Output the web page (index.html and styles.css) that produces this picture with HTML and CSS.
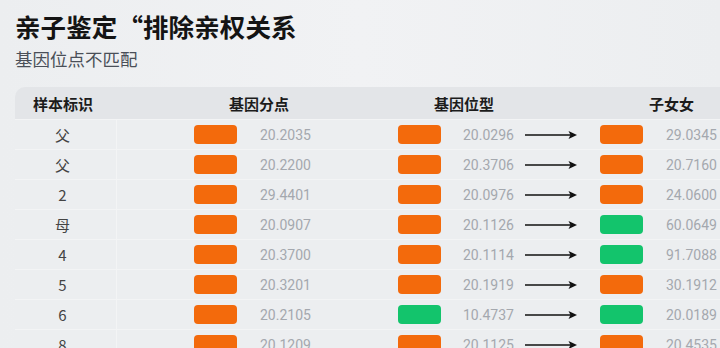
FILE: index.html
```html
<!DOCTYPE html>
<html lang="zh-CN">
<head>
<meta charset="utf-8">
<link rel="stylesheet" href="styles.css">
</head>
<body>
<div class="page">
  <h1 class="title">亲子鉴定“排除亲权关系</h1>
  <p class="subtitle">基因位点不匹配</p>
  <div class="table">
    <div class="row head">
      <div class="id">样本标识</div>
      <div class="h2">基因分点</div>
      <div class="h3">基因位型</div>
      <div class="h4">子女女</div>
    </div>
    <div class="row">
      <div class="id">父</div>
      <span class="bar o b1"></span><span class="num n1">20.2035</span>
      <span class="bar o"></span><span class="num n2">20.0296</span>
      <svg class="arrow" viewBox="0 0 52 10"><line x1="0" y1="5" x2="49" y2="5"/><path d="M43.5 1 L52 5 L43.5 9 L45.5 5 Z"/></svg>
      <span class="bar o b4"></span><span class="num n4">29.0345</span>
    </div>
    <div class="row">
      <div class="id">父</div>
      <span class="bar o b1"></span><span class="num n1">20.2200</span>
      <span class="bar o"></span><span class="num n2">20.3706</span>
      <svg class="arrow" viewBox="0 0 52 10"><line x1="0" y1="5" x2="49" y2="5"/><path d="M43.5 1 L52 5 L43.5 9 L45.5 5 Z"/></svg>
      <span class="bar o b4"></span><span class="num n4">20.7160</span>
    </div>
    <div class="row">
      <div class="id">2</div>
      <span class="bar o b1"></span><span class="num n1">29.4401</span>
      <span class="bar o"></span><span class="num n2">20.0976</span>
      <svg class="arrow" viewBox="0 0 52 10"><line x1="0" y1="5" x2="49" y2="5"/><path d="M43.5 1 L52 5 L43.5 9 L45.5 5 Z"/></svg>
      <span class="bar o b4"></span><span class="num n4">24.0600</span>
    </div>
    <div class="row">
      <div class="id">母</div>
      <span class="bar o b1"></span><span class="num n1">20.0907</span>
      <span class="bar o"></span><span class="num n2">20.1126</span>
      <svg class="arrow" viewBox="0 0 52 10"><line x1="0" y1="5" x2="49" y2="5"/><path d="M43.5 1 L52 5 L43.5 9 L45.5 5 Z"/></svg>
      <span class="bar g b4"></span><span class="num n4">60.0649</span>
    </div>
    <div class="row">
      <div class="id">4</div>
      <span class="bar o b1"></span><span class="num n1">20.3700</span>
      <span class="bar o"></span><span class="num n2">20.1114</span>
      <svg class="arrow" viewBox="0 0 52 10"><line x1="0" y1="5" x2="49" y2="5"/><path d="M43.5 1 L52 5 L43.5 9 L45.5 5 Z"/></svg>
      <span class="bar g b4"></span><span class="num n4">91.7088</span>
    </div>
    <div class="row">
      <div class="id">5</div>
      <span class="bar o b1"></span><span class="num n1">20.3201</span>
      <span class="bar o"></span><span class="num n2">20.1919</span>
      <svg class="arrow" viewBox="0 0 52 10"><line x1="0" y1="5" x2="49" y2="5"/><path d="M43.5 1 L52 5 L43.5 9 L45.5 5 Z"/></svg>
      <span class="bar o b4"></span><span class="num n4">30.1912</span>
    </div>
    <div class="row">
      <div class="id">6</div>
      <span class="bar o b1"></span><span class="num n1">20.2105</span>
      <span class="bar g"></span><span class="num n2">10.4737</span>
      <svg class="arrow" viewBox="0 0 52 10"><line x1="0" y1="5" x2="49" y2="5"/><path d="M43.5 1 L52 5 L43.5 9 L45.5 5 Z"/></svg>
      <span class="bar g b4"></span><span class="num n4">20.0189</span>
    </div>
    <div class="row">
      <div class="id">8</div>
      <span class="bar o b1"></span><span class="num n1">20.1209</span>
      <span class="bar o"></span><span class="num n2">20.1125</span>
      <svg class="arrow" viewBox="0 0 52 10"><line x1="0" y1="5" x2="49" y2="5"/><path d="M43.5 1 L52 5 L43.5 9 L45.5 5 Z"/></svg>
      <span class="bar o b4"></span><span class="num n4">20.4535</span>
    </div>
  </div>
</div>
</body>
</html>
```

FILE: styles.css
```css
html, body {
  margin: 0;
  padding: 0;
  width: 720px;
  height: 348px;
  overflow: hidden;
}
body {
  background: linear-gradient(90deg, #eceef0 0%, #f1f2f4 50%, #eceef0 100%);
  font-family: "Noto Sans CJK SC", "Noto Sans", sans-serif;
  color: #222;
}
.page {
  padding: 10px 0 0 15px;
}
.title {
  margin: 0;
  font-size: 25.5px;
  line-height: 32px;
  font-weight: 700;
  color: #141414;
  letter-spacing: 0.1px;
}
.subtitle {
  margin: 5px 0 0;
  font-size: 17.5px;
  line-height: 24px;
  color: #4a4f58;
}
.table {
  margin-top: 16px;
  width: 720px;
  border-radius: 10px 0 0 0;
  overflow: hidden;
  background: #eceef0;
}
.row {
  display: flex;
  align-items: center;
  height: 30px;
  border-top: 1px solid #f3f4f5;
  box-sizing: border-box;
}
.row.head {
  height: 32px;
  border-top: none;
  background: #e3e5e8;
  font-weight: 600;
  font-size: 15px;
  color: #1c1c1c;
}
.id {
  width: 102px;
  flex: none;
  align-self: stretch;
  display: flex;
  align-items: center;
  justify-content: center;
  padding-right: 6px;
  box-sizing: border-box;
  border-right: 1px solid #f3f4f5;
  font-size: 15px;
  color: #444;
}
.head .id {
  border-right: none;
  color: #1c1c1c;
}
.h2 { margin-left: 112px; width: 60px; }
.h3 { margin-left: 145px; width: 60px; }
.h4 { margin-left: 155px; }
.bar {
  flex: none;
  width: 43px;
  height: 19px;
  border-radius: 4px;
}
.bar.o { background: #f36a0c; }
.bar.g { background: #13c46c; }
.b1 { margin-left: 77px; }
.b4 { margin-left: 23px; }
.num {
  flex: none;
  font-family: Roboto, "Noto Sans", sans-serif;
  font-size: 14px;
  color: #a4a8ae;
}
.n1 { margin-left: 23px; width: 138px; }
.n2 { margin-left: 22px; width: 62px; }
.n4 { margin-left: 23px; }
.arrow {
  flex: none;
  width: 52px;
  height: 10px;
}
.arrow line {
  stroke: #111;
  stroke-width: 1.5;
}
.arrow path {
  fill: #111;
}
```
